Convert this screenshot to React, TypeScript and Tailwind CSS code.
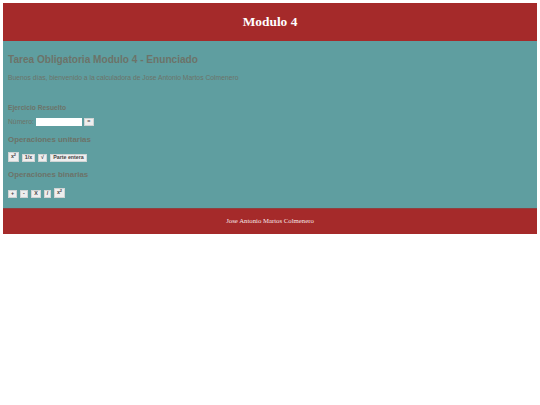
const unarias = [
  { label: <>x<sup className="text-[4px] leading-none">2</sup></>, w: 'w-[11px]', tall: true },
  { label: '1/x', w: 'w-[13px]', tall: false },
  { label: '√', w: 'w-[9px]', tall: false },
  { label: 'Parte entera', w: 'w-[37px]', tall: false },
]
const binarias = [
  { label: '+', w: 'w-[9px]', tall: false },
  { label: '-', w: 'w-[8px]', tall: false },
  { label: 'X', w: 'w-[10px]', tall: false },
  { label: '/', w: 'w-[7px]', tall: false },
  { label: <>x<sup className="text-[4px] leading-none">2</sup></>, w: 'w-[11px]', tall: true },
]

const CalcButton = ({ label, w, tall }: { label: React.ReactNode; w: string; tall: boolean }) => (
  <button
    className={`${w} ${tall ? 'h-[10px]' : 'h-[8px]'} bg-[#eeeeee] border border-[#d0d4d4] text-[5.3px] leading-none font-bold text-[#444] whitespace-nowrap`}
  >
    {label}
  </button>
)

export default function App() {
  return (
    <div className="min-h-[405px] bg-white p-[3px] font-['Liberation_Sans',sans-serif]">
      <div>
        <header className="h-[38px] bg-[#a52a2a] flex items-center justify-center">
          <h1 className="font-['Liberation_Serif',serif] text-[13.4px] font-bold text-white">Modulo 4</h1>
        </header>

        <main className="h-[167px] bg-[#5f9ea0] px-[5px] text-[#6c7369]">
          <h2 className="pt-[13px] text-[10.1px] leading-[12px] font-bold">Tarea Obligatoria Modulo 4 - Enunciado</h2>
          <p className="mt-[8px] text-[6.75px] leading-[8px]">
            Buenos días, bienvenido a la calculadora de Jose Antonio Martos Colmenero
          </p>

          <h3 className="mt-[22px] text-[6.7px] leading-[8px] font-bold">Ejercicio Resuelto</h3>
          <div className="mt-[6px] flex items-center gap-[2px] text-[6.75px] leading-[8px]">
            <span>Número:</span>
            <input className="w-[46px] h-[8px] bg-white" />
            <CalcButton label="=" w="w-[10px]" tall={false} />
          </div>

          <h3 className="mt-[9px] text-[7.9px] leading-[10px] font-bold">Operaciones unitarias</h3>
          <div className="mt-[7px] flex items-end gap-[3px]">
            {unarias.map((b, i) => (
              <CalcButton key={i} {...b} />
            ))}
          </div>

          <h3 className="mt-[8px] text-[7.9px] leading-[10px] font-bold">Operaciones binarias</h3>
          <div className="mt-[8px] flex items-end gap-[3px]">
            {binarias.map((b, i) => (
              <CalcButton key={i} {...b} />
            ))}
          </div>
        </main>

        <footer className="h-[26px] bg-[#a52a2a] border-t border-[#8f4040] flex items-center justify-center font-['Liberation_Serif',serif] text-[6.75px] text-[#f5e6e6]">
          Jose Antonio Martos Colmenero
        </footer>
      </div>
    </div>
  )
}
